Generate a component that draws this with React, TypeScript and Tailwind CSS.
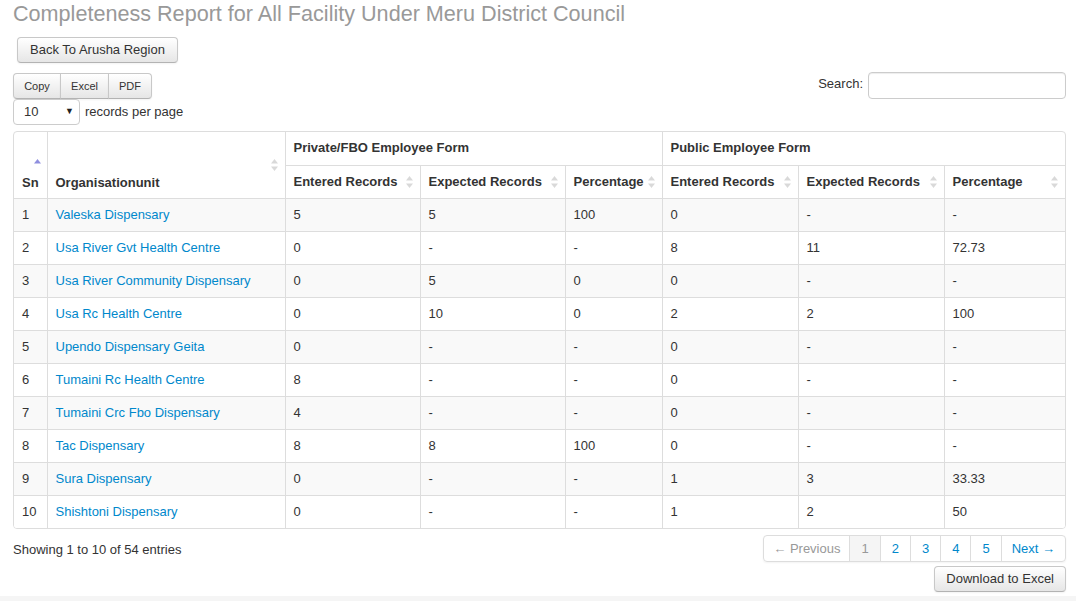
import React from "react";

type Row = {
  sn: number;
  name: string;
  pe: string;
  px: string;
  pp: string;
  ue: string;
  ux: string;
  up: string;
};

const rows: Row[] = [
  { sn: 1, name: "Valeska Dispensary", pe: "5", px: "5", pp: "100", ue: "0", ux: "-", up: "-" },
  { sn: 2, name: "Usa River Gvt Health Centre", pe: "0", px: "-", pp: "-", ue: "8", ux: "11", up: "72.73" },
  { sn: 3, name: "Usa River Community Dispensary", pe: "0", px: "5", pp: "0", ue: "0", ux: "-", up: "-" },
  { sn: 4, name: "Usa Rc Health Centre", pe: "0", px: "10", pp: "0", ue: "2", ux: "2", up: "100" },
  { sn: 5, name: "Upendo Dispensary Geita", pe: "0", px: "-", pp: "-", ue: "0", ux: "-", up: "-" },
  { sn: 6, name: "Tumaini Rc Health Centre", pe: "8", px: "-", pp: "-", ue: "0", ux: "-", up: "-" },
  { sn: 7, name: "Tumaini Crc Fbo Dispensary", pe: "4", px: "-", pp: "-", ue: "0", ux: "-", up: "-" },
  { sn: 8, name: "Tac Dispensary", pe: "8", px: "8", pp: "100", ue: "0", ux: "-", up: "-" },
  { sn: 9, name: "Sura Dispensary", pe: "0", px: "-", pp: "-", ue: "1", ux: "3", up: "33.33" },
  { sn: 10, name: "Shishtoni Dispensary", pe: "0", px: "-", pp: "-", ue: "1", ux: "2", up: "50" },
];

function SortBoth() {
  return (
    <svg width="9" height="14" viewBox="0 0 9 14" className="absolute right-[6px] top-1/2 -translate-y-1/2">
      <path d="M4.5 1 L8 5.5 H1 Z" fill="#d9d9d9" />
      <path d="M4.5 13 L8 8.5 H1 Z" fill="#d9d9d9" />
    </svg>
  );
}

function SortAsc() {
  return (
    <svg width="9" height="14" viewBox="0 0 9 14" className="absolute right-[5px] top-1/2 -translate-y-1/2">
      <path d="M4.5 1 L8 5.5 H1 Z" fill="#8f8fdf" />
    </svg>
  );
}

const btn =
  "border border-[#c8c8c8] border-b-[#b3b3b3] bg-linear-to-b from-white to-[#e6e6e6] text-[#333] shadow-[inset_0_1px_0_rgba(255,255,255,0.2),0_1px_2px_rgba(0,0,0,0.05)]";

const th = "relative border border-[#dddddd] px-[8px] text-left font-bold text-[#333] align-middle";
const td = "border border-[#dddddd] px-[8px] text-[#333]";

export default function App() {
  return (
    <div className="min-h-[601px] bg-white font-['Liberation_Sans',Arial,sans-serif] text-[13px] text-[#333]">
      <div className="pl-[13px] pr-[10px]">
        <h1 className="text-[21.6px] leading-[27px] font-normal text-[#999]">
          Completeness Report for All Facility Under Meru District Council
        </h1>

        <div className="mt-[10px] ml-[4px]">
          <button className={`${btn} h-[26px] rounded-[4px] px-[12px] text-[13px]`}>Back To Arusha Region</button>
        </div>

        <div className="mt-[10px] flex items-start justify-between">
          <div>
            <div className="flex">
              <button className={`${btn} h-[26px] w-[48px] rounded-l-[4px] text-[11px]`}>Copy</button>
              <button className={`${btn} -ml-px h-[26px] w-[49px] text-[11px]`}>Excel</button>
              <button className={`${btn} -ml-px h-[26px] w-[44px] rounded-r-[4px] text-[11px]`}>PDF</button>
            </div>
            <div className="flex items-center">
              <div className="flex h-[26px] w-[67px] items-center justify-between rounded-[4px] border border-[#cccccc] bg-white pl-[10px] pr-[5px]">
                <span>10</span>
                <span className="text-[9px] text-[#222]">▼</span>
              </div>
              <span className="ml-[5px]">records per page</span>
            </div>
          </div>
          <label className="-mt-px flex items-center gap-[5px]">
            <span className="-mt-[3px]">Search:</span>
            <input className="h-[27px] w-[198px] rounded-[4px] border border-[#cccccc] shadow-[inset_0_1px_1px_rgba(0,0,0,0.075)] outline-none" />
          </label>
        </div>

        <div className="mt-[6px] overflow-hidden rounded-[4px] border border-[#dddddd]">
          <table className="w-full table-fixed border-collapse border-hidden leading-[20px]">
            <colgroup>
              <col className="w-[33px]" />
              <col className="w-[238px]" />
              <col className="w-[135px]" />
              <col className="w-[145px]" />
              <col className="w-[97px]" />
              <col className="w-[136px]" />
              <col className="w-[146px]" />
              <col />
            </colgroup>
            <thead>
              <tr className="h-[33px]">
                <th rowSpan={2} className={`${th} !align-bottom pb-[5px]`}>
                  Sn
                  <SortAsc />
                </th>
                <th rowSpan={2} className={`${th} !align-bottom pb-[5px]`}>
                  Organisationunit
                  <SortBoth />
                </th>
                <th colSpan={3} className={th}>Private/FBO Employee Form</th>
                <th colSpan={3} className={th}>Public Employee Form</th>
              </tr>
              <tr className="h-[33px]">
                {["Entered Records", "Expected Records", "Percentage", "Entered Records", "Expected Records", "Percentage"].map(
                  (h, i) => (
                    <th key={i} className={th}>
                      {h}
                      <SortBoth />
                    </th>
                  )
                )}
              </tr>
            </thead>
            <tbody>
              {rows.map((r, i) => (
                <tr key={r.sn} className={`h-[33px] ${i % 2 === 0 ? "bg-[#f9f9f9]" : "bg-white"}`}>
                  <td className={td}>{r.sn}</td>
                  <td className={td}>
                    <a className="text-[#0088cc]">{r.name}</a>
                  </td>
                  <td className={td}>{r.pe}</td>
                  <td className={td}>{r.px}</td>
                  <td className={td}>{r.pp}</td>
                  <td className={td}>{r.ue}</td>
                  <td className={td}>{r.ux}</td>
                  <td className={td}>{r.up}</td>
                </tr>
              ))}
            </tbody>
          </table>
        </div>

        <div className="mt-[6px] flex items-center justify-between">
          <div className="mt-[2px]">Showing 1 to 10 of 54 entries</div>
          <div className="flex h-[27px] overflow-hidden rounded-[4px] border border-[#dddddd] shadow-[0_1px_2px_rgba(0,0,0,0.05)]">
            <span className="flex items-center px-[9px] text-[#999]">← Previous</span>
            <span className="flex items-center border-l border-[#dddddd] bg-[#f5f5f5] px-[11px] text-[#999]">1</span>
            {["2", "3", "4", "5"].map((p) => (
              <span key={p} className="flex items-center border-l border-[#dddddd] px-[11px] text-[#0088cc]">
                {p}
              </span>
            ))}
            <span className="flex items-center border-l border-[#dddddd] px-[10px] text-[#0088cc]">Next →</span>
          </div>
        </div>

        <div className="mt-[4px] flex justify-end">
          <button className={`${btn} h-[26px] rounded-[4px] px-[11px] text-[13px]`}>Download to Excel</button>
        </div>
      </div>
      <div className="mt-[4px] h-[10px] bg-[#f5f5f5]" />
    </div>
  );
}
